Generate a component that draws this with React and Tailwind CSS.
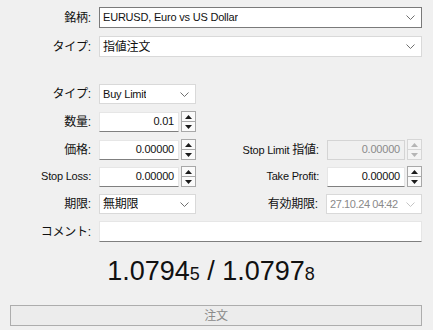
import React from 'react';

const Chevron = ({ color = '#6f6f6f' }) => (
  <svg width="9" height="5" viewBox="0 0 9 5" className="shrink-0">
    <path d="M0.5 0.5 L4.5 4.5 L8.5 0.5" fill="none" stroke={color} strokeWidth="1" />
  </svg>
);

const Combo = ({ children, className = '', dark, disabled }) => (
  <div
    className={`flex items-center justify-between bg-white border pl-[3px] pr-[6px] ${
      dark ? 'border-[#7a7a7a]' : 'border-[#d9d9d9]'
    } ${disabled ? 'text-[#8a8a8a] bg-[#f7f7f7]' : 'text-[#111]'} ${className}`}
  >
    <span className="truncate">{children}</span>
    <Chevron color={disabled ? '#c4c4c4' : '#6f6f6f'} />
  </div>
);

const Spinner = ({ disabled }) => {
  const c = disabled ? '#b5b5b5' : '#1a1a1a';
  return (
    <div
      className={`flex flex-col w-[15px] h-[21px] border ${
        disabled ? 'border-[#d6d6d6] bg-[#f4f4f4]' : 'border-[#a8a8a8] bg-[#fafafa]'
      }`}
    >
      <div className="flex-1 flex items-center justify-center">
        <svg width="7" height="4" viewBox="0 0 7 4"><path d="M3.5 0 L7 4 L0 4 Z" fill={c} /></svg>
      </div>
      <div className={`h-px ${disabled ? 'bg-[#d6d6d6]' : 'bg-[#a8a8a8]'}`} />
      <div className="flex-1 flex items-center justify-center">
        <svg width="7" height="4" viewBox="0 0 7 4"><path d="M0 0 L7 0 L3.5 4 Z" fill={c} /></svg>
      </div>
    </div>
  );
};

const NumField = ({ value, disabled, w = 'w-[80px]' }) => (
  <div className="flex items-center gap-[2px]">
    <div
      className={`${w} h-[20px] flex items-center justify-end pr-[4px] border ${
        disabled
          ? 'bg-[#f0f0f0] border-[#d4d4d4] text-[#8a8a8a]'
          : 'bg-white border-[#e6e6e6] border-b-[#7f7f7f] text-[#111]'
      }`}
    >
      {value}
    </div>
    <Spinner disabled={disabled} />
  </div>
);

const Label = ({ children, className = 'w-[99px]' }) => (
  <div className={`${className} shrink-0 text-right pr-[8px] text-[#111]`}>{children}</div>
);

const J = ({ children }) => <span className="text-[12px]">{children}</span>;

export default function App() {
  return (
    <div className="w-[433px] h-[330px] bg-[#f0f0f0] font-['Liberation_Sans','Noto_Sans_CJK_JP',sans-serif] text-[11px] tracking-[-0.2px] pt-[7px] pr-[11px] overflow-hidden">
      <div className="flex items-center h-[21px]">
        <Label><J>銘柄:</J></Label>
        <Combo dark className="flex-1 h-[21px]">EURUSD, Euro vs US Dollar</Combo>
      </div>
      <div className="flex items-center h-[21px] mt-[8px]">
        <Label><J>タイプ:</J></Label>
        <Combo className="flex-1 h-[21px]"><J>指値注文</J></Combo>
      </div>

      <div className="flex items-center h-[20px] mt-[27px]">
        <Label><J>タイプ:</J></Label>
        <Combo className="w-[97px] h-[20px]">Buy Limit</Combo>
      </div>
      <div className="flex items-center h-[21px] mt-[7px]">
        <Label><J>数量:</J></Label>
        <NumField value="0.01" />
      </div>
      <div className="flex items-center h-[21px] mt-[7px]">
        <Label><J>価格:</J></Label>
        <NumField value="0.00000" />
        <Label className="flex-1">Stop Limit <J>指値:</J></Label>
        <NumField value="0.00000" disabled w="w-[78px]" />
      </div>
      <div className="flex items-center h-[21px] mt-[6px]">
        <Label>Stop Loss:</Label>
        <NumField value="0.00000" />
        <Label className="flex-1">Take Profit:</Label>
        <NumField value="0.00000" w="w-[78px]" />
      </div>
      <div className="flex items-center h-[20px] mt-[7px]">
        <Label><J>期限:</J></Label>
        <Combo className="w-[97px] h-[20px]"><J>無期限</J></Combo>
        <Label className="flex-1"><J>有効期限:</J></Label>
        <Combo disabled className="w-[96px] h-[20px] tracking-[-0.4px]">27.10.24 04:42</Combo>
      </div>
      <div className="flex items-center h-[21px] mt-[7px]">
        <Label><J>コメント:</J></Label>
        <div className="flex-1 h-[21px] bg-white border border-[#e6e6e6] border-b-[#7f7f7f]" />
      </div>

      <div className="flex justify-center items-baseline mt-[16px] text-[#111] tracking-normal leading-none">
        <span className="text-[27px]">1.0794</span>
        <span className="text-[18px]">5</span>
        <span className="text-[27px]">&nbsp;/&nbsp;1.0797</span>
        <span className="text-[18px]">8</span>
      </div>

      <div className="ml-[10px] mt-[20px] h-[21px] flex items-center justify-center border border-[#adadad] bg-[#ececec] text-[#8a8a8a]">
        <J>注文</J>
      </div>
    </div>
  );
}
